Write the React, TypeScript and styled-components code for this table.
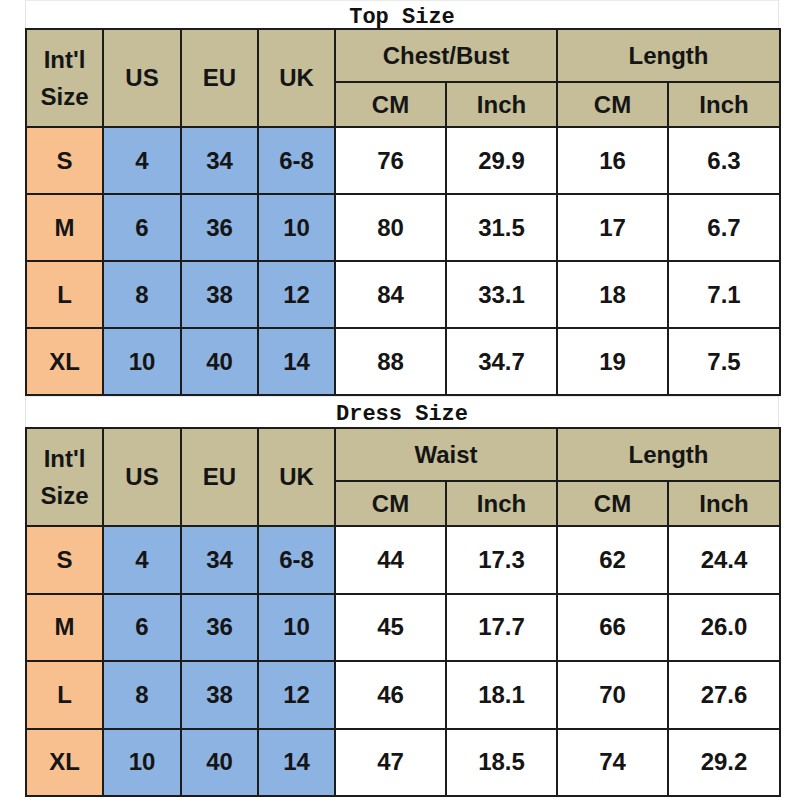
import React from 'react';
import styled, { createGlobalStyle } from 'styled-components';

const GlobalStyle = createGlobalStyle`
  body {
    margin: 0;
    background: #fff;
  }
`;

const StyledPage = styled.div`
  padding: 0 0 0 25px;
  width: 800px;
  box-sizing: border-box;
`;

const StyledTitle = styled.div<{ height: number }>`
  width: 754px;
  height: ${(p) => p.height}px;
  box-sizing: border-box;
  border-left: 1px solid #e4e4e4;
  border-right: 1px solid #e4e4e4;
  border-top: 1px solid #eaeaea;
  display: flex;
  align-items: center;
  justify-content: center;
  font-family: 'Liberation Mono', 'Courier New', monospace;
  font-weight: 700;
  font-size: 22px;
  color: #111;
  padding: 5px 0 0;
`;

const StyledTable = styled.table`
  border-collapse: collapse;
  table-layout: fixed;
  width: 754px;
  font-family: 'Liberation Sans', Arial, sans-serif;
  font-weight: 700;
  font-size: 24px;
  color: #151515;
`;

const StyledCell = styled.td<{ tone?: 'head' | 'size' | 'region'; tall?: boolean }>`
  border: 2px solid #1c1c1c;
  text-align: center;
  vertical-align: middle;
  padding: 0;
  line-height: ${(p) => (p.tall ? '37px' : '1.15')};
  background: ${(p) =>
    p.tone === 'head' ? '#c5be98' : p.tone === 'size' ? '#f9c08f' : p.tone === 'region' ? '#8db3e2' : '#fff'};
`;

interface Chart {
  title: string;
  measure: string;
  rows: string[][];
}

const charts: Chart[] = [
  {
    title: 'Top Size',
    measure: 'Chest/Bust',
    rows: [
      ['S', '4', '34', '6-8', '76', '29.9', '16', '6.3'],
      ['M', '6', '36', '10', '80', '31.5', '17', '6.7'],
      ['L', '8', '38', '12', '84', '33.1', '18', '7.1'],
      ['XL', '10', '40', '14', '88', '34.7', '19', '7.5'],
    ],
  },
  {
    title: 'Dress Size',
    measure: 'Waist',
    rows: [
      ['S', '4', '34', '6-8', '44', '17.3', '62', '24.4'],
      ['M', '6', '36', '10', '45', '17.7', '66', '26.0'],
      ['L', '8', '38', '12', '46', '18.1', '70', '27.6'],
      ['XL', '10', '40', '14', '47', '18.5', '74', '29.2'],
    ],
  },
];

const widths = [77, 78, 77, 77, 111, 111, 111, 112];

const SizeTable = ({ chart, titleHeight, rowHeight }: { chart: Chart; titleHeight: number; rowHeight: number }) => (
  <>
    <StyledTitle height={titleHeight}>{chart.title}</StyledTitle>
    <StyledTable>
      <colgroup>
        {widths.map((w, i) => (
          <col key={i} style={{ width: w }} />
        ))}
      </colgroup>
      <tbody>
        <tr style={{ height: 53 }}>
          <StyledCell tone="head" tall rowSpan={2}>
            Int'l
            <br />
            Size
          </StyledCell>
          <StyledCell tone="head" rowSpan={2}>US</StyledCell>
          <StyledCell tone="head" rowSpan={2}>EU</StyledCell>
          <StyledCell tone="head" rowSpan={2}>UK</StyledCell>
          <StyledCell tone="head" colSpan={2}>{chart.measure}</StyledCell>
          <StyledCell tone="head" colSpan={2}>Length</StyledCell>
        </tr>
        <tr style={{ height: 45 }}>
          <StyledCell tone="head">CM</StyledCell>
          <StyledCell tone="head">Inch</StyledCell>
          <StyledCell tone="head">CM</StyledCell>
          <StyledCell tone="head">Inch</StyledCell>
        </tr>
        {chart.rows.map((row) => (
          <tr key={row[0]} style={{ height: rowHeight }}>
            {row.map((v, i) => (
              <StyledCell key={i} tone={i === 0 ? 'size' : i < 4 ? 'region' : undefined}>
                {v}
              </StyledCell>
            ))}
          </tr>
        ))}
      </tbody>
    </StyledTable>
  </>
);

export default function App() {
  return (
    <StyledPage>
      <GlobalStyle />
      <SizeTable chart={charts[0]} titleHeight={28} rowHeight={67} />
      <SizeTable chart={charts[1]} titleHeight={31} rowHeight={67.5} />
    </StyledPage>
  );
}
